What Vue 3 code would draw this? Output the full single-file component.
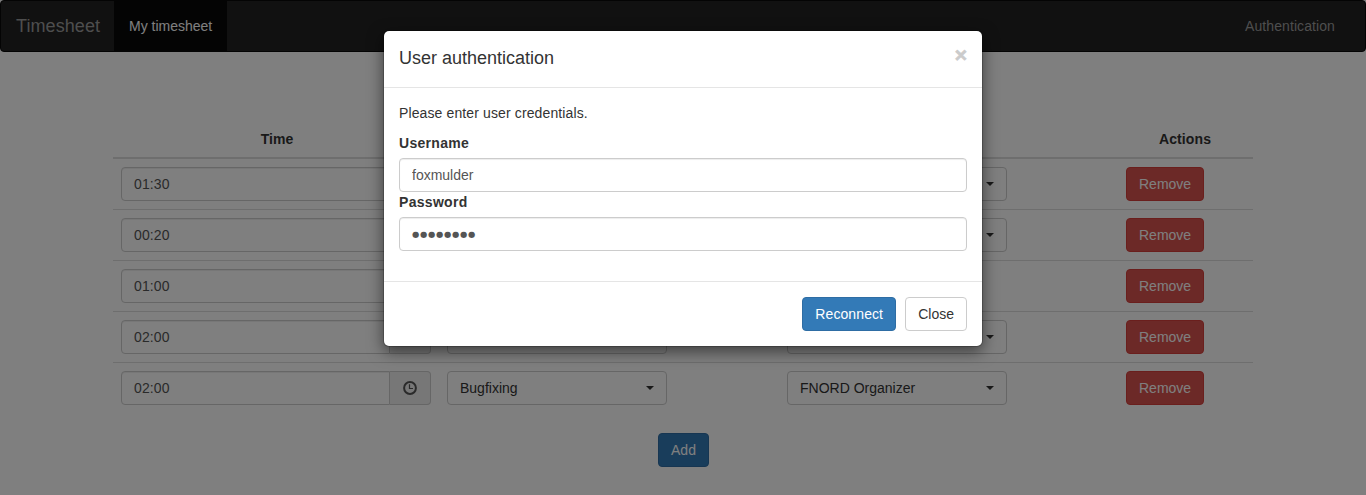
<script setup>
import { ref } from 'vue'

const rows = ref([
  { time: '01:30', activity: '', project: '', hasProject: true },
  { time: '00:20', activity: '', project: '', hasProject: true },
  { time: '01:00', activity: '', project: '', hasProject: false },
  { time: '02:00', activity: '', project: '', hasProject: true },
  { time: '02:00', activity: 'Bugfixing', project: 'FNORD Organizer', hasProject: true }
])
const username = ref('foxmulder')
const mask = '●'.repeat(8)
</script>

<template>
  <div class="page">
    <nav class="navbar">
      <a class="brand">Timesheet</a>
      <a class="nav-link active">My timesheet</a>
      <a class="nav-link right">Authentication</a>
    </nav>

    <main class="container">
      <div class="grid head">
        <div class="th time">Time</div>
        <div class="th"></div>
        <div class="th"></div>
        <div class="th actions">Actions</div>
      </div>
      <div v-for="(row, i) in rows" :key="i" class="grid row">
        <div class="cell">
          <div class="input-group">
            <input v-model="row.time" class="form-control" type="text" />
            <span class="addon">
              <svg width="14" height="14" viewBox="0 0 14 14" fill="none" stroke="#555">
                <circle cx="7" cy="7" r="5.9" stroke-width="2" />
                <path d="M6.5 3.3V7.5H10" stroke-width="1.2" />
              </svg>
            </span>
          </div>
        </div>
        <div class="cell">
          <button class="btn btn-default select">{{ row.activity }}<span class="caret"></span></button>
        </div>
        <div class="cell">
          <button v-if="row.hasProject" class="btn btn-default select">{{ row.project }}<span class="caret"></span></button>
        </div>
        <div class="cell">
          <button class="btn btn-danger">Remove</button>
        </div>
      </div>
      <div class="add-bar">
        <button class="btn btn-primary add">Add</button>
      </div>
    </main>

    <div class="backdrop"></div>
    <div class="modal">
      <div class="dialog">
        <header class="modal-header">
          <h4>User authentication</h4>
          <button class="close">×</button>
        </header>
        <form class="modal-body" @submit.prevent>
          <p>Please enter user credentials.</p>
          <label>Username</label>
          <input v-model="username" class="form-control" type="text" />
          <label>Password</label>
          <div class="form-control password">{{ mask }}</div>
        </form>
        <footer class="modal-footer">
          <button class="btn btn-primary reconnect">Reconnect</button>
          <button class="btn btn-default">Close</button>
        </footer>
      </div>
    </div>
  </div>
</template>

<style>
body {
  margin: 0;
  background: #fff;
}
</style>

<style scoped>
.page,
.page * {
  box-sizing: border-box;
}
.page {
  position: relative;
  height: 495px;
  overflow: hidden;
  font-family: "Liberation Sans", Arial, sans-serif;
  font-size: 14px;
  line-height: 20px;
  color: #333;
}
.navbar {
  display: flex;
  height: 52px;
  margin-bottom: 69px;
  padding-right: 15px;
  background: #222;
  border: 1px solid #080808;
  border-radius: 4px;
}
.brand,
.nav-link {
  padding: 15px;
  color: #9d9d9d;
}
.brand {
  width: 113px;
  font-size: 18px;
  letter-spacing: 0.08px;
}
.nav-link.active {
  width: 113px;
  white-space: nowrap;
  color: #fff;
  background: #080808;
}
.nav-link.right {
  margin-left: auto;
  letter-spacing: 0.09px;
}
.container {
  width: 1140px;
  margin: 0 auto;
}
.grid {
  display: grid;
  grid-template-columns: 326px 340px 339px 135px;
}
.head {
  height: 38px;
  border-bottom: 2px solid #ddd;
}
.th {
  padding: 8px;
  font-weight: 700;
  text-align: center;
}
.th.time {
  padding-left: 10px;
}
.th.actions {
  padding-right: 9px;
  letter-spacing: 0.12px;
}
.row + .row {
  border-top: 1px solid #ddd;
}
.cell {
  height: 50px;
  padding: 8px;
}
.input-group {
  display: flex;
  width: 310px;
}
.form-control {
  display: block;
  width: 100%;
  height: 34px;
  margin: 0;
  padding: 6px 12px;
  font: inherit;
  color: #555;
  background: #fff;
  border: 1px solid #ccc;
  border-radius: 4px;
  outline: none;
  box-shadow: inset 0 1px 1px rgba(0, 0, 0, 0.075);
}
.input-group .form-control {
  width: 269px;
  border-radius: 4px 0 0 4px;
  letter-spacing: 0.1px;
}
.addon {
  display: flex;
  align-items: center;
  justify-content: center;
  width: 41px;
  height: 34px;
  background: #eee;
  border: 1px solid #ccc;
  border-left: 0;
  border-radius: 0 4px 4px 0;
}
.btn {
  height: 34px;
  margin: 0;
  padding: 6px 12px;
  font: inherit;
  white-space: nowrap;
  border: 1px solid transparent;
  border-radius: 4px;
}
.btn-default {
  color: #333;
  background: #fff;
  border-color: #ccc;
}
.btn-primary {
  color: #fff;
  background: #337ab7;
  border-color: #2e6da4;
}
.btn-danger {
  width: 78px;
  color: #fff;
  background: #d9534f;
  border-color: #d43f3a;
}
.add {
  width: 51px;
}
.reconnect {
  width: 94px;
  letter-spacing: 0.1px;
}
.select {
  display: flex;
  align-items: center;
  justify-content: space-between;
  width: 220px;
}
.caret {
  margin-left: auto;
  border-top: 4px solid #333;
  border-left: 4px solid transparent;
  border-right: 4px solid transparent;
}
.add-bar {
  display: flex;
  justify-content: center;
  padding: 20px 0 0 1px;
}
.backdrop {
  position: absolute;
  inset: 0;
  background: rgba(0, 0, 0, 0.5);
}
.modal {
  position: absolute;
  inset: 0;
  padding-top: 30px;
}
.dialog {
  width: 600px;
  margin: 0 auto;
  background: #fff;
  background-clip: padding-box;
  border: 1px solid rgba(0, 0, 0, 0.2);
  border-radius: 6px;
  box-shadow: 0 5px 15px rgba(0, 0, 0, 0.5);
}
.modal-header {
  display: flex;
  justify-content: space-between;
  align-items: flex-start;
  padding: 15px;
  border-bottom: 1px solid #e5e5e5;
}
.modal-header h4 {
  margin: 0;
  font-size: 18px;
  font-weight: 500;
  line-height: 1.42857143;
}
.close {
  margin: -2px 0 0;
  padding: 0;
  font: inherit;
  font-size: 21px;
  font-weight: 700;
  line-height: 1;
  color: #000;
  background: none;
  border: 0;
  opacity: 0.2;
  -webkit-text-stroke: 0.8px #000;
}
.modal-body {
  padding: 15px 15px 30px;
}
.modal-body p {
  margin: 0 0 10px;
  letter-spacing: 0.12px;
}
.modal-body label {
  display: block;
  margin-bottom: 5px;
  font-weight: 700;
  letter-spacing: 0.3px;
}
.password {
  font-family: "DejaVu Sans", sans-serif;
  font-size: 8.4px;
  letter-spacing: 0.7px;
}
.modal-footer {
  display: flex;
  justify-content: flex-end;
  gap: 9px;
  padding: 15px;
  border-top: 1px solid #e5e5e5;
}
</style>
